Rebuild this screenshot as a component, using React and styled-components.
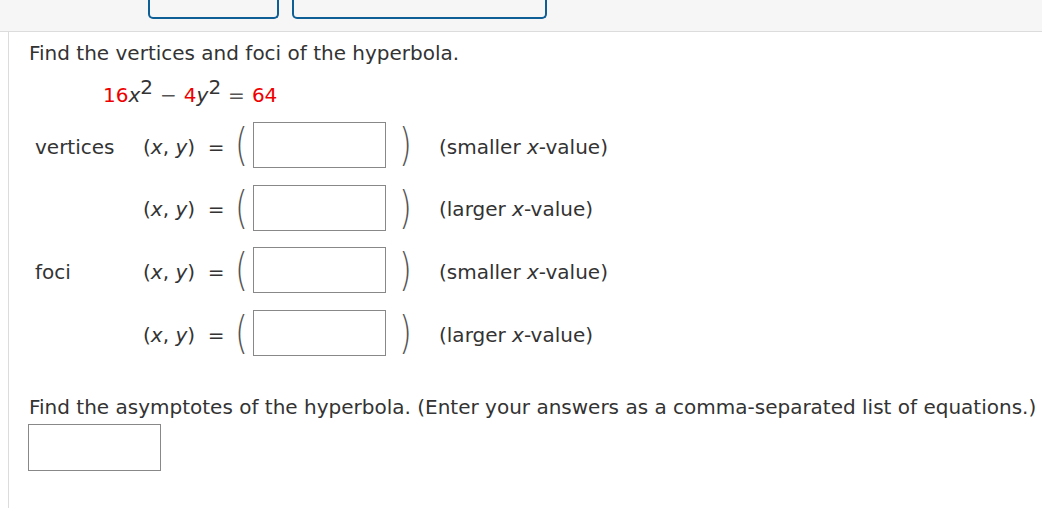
import React from 'react'
import styled, { createGlobalStyle } from 'styled-components'

const Global = createGlobalStyle`
    body {
        margin: 0;
        background: #fff;
        font-family: 'DejaVu Sans', Verdana, sans-serif;
        color: #333;
    }
`

const TopBar = styled.div`
    height: 31px;
    background: #f6f6f6;
    border-bottom: 1px solid #dcdcdc;
    display: flex;
    align-items: flex-start;
    gap: 13px;
    padding-left: 148px;
`

const TabButton = styled.div`
    box-sizing: border-box;
    width: ${p => p.w}px;
    height: 19px;
    border: 2px solid #0e5f96;
    border-top: none;
    border-radius: 0 0 5px 5px;
    background: #f6f6f6;
`

const Panel = styled.div`
    margin-left: 8px;
    border-left: 1px solid #dcdcdc;
    padding: 9px 0 0 20px;
    min-height: calc(100vh - 32px);
    box-sizing: border-box;
    font-size: 20px;
`

const Prompt = styled.div`
    line-height: 24px;
    white-space: nowrap;
`

const Equation = styled.div`
    line-height: 24px;
    margin: 18px 0 0 74px;
    color: #333;
`

const Red = styled.span`
    color: #ee0000;
`

const Var = styled.i`
    font-style: italic;
`

const Sup = styled.sup`
    font-size: 20px;
    line-height: 0;
    vertical-align: 8px;
`

const Op = styled.span`
    color: #555;
    margin: 0 7px;
`

const Rows = styled.div`
    display: grid;
    grid-template-columns: 108px 92px auto;
    grid-auto-rows: 46px;
    row-gap: 16.7px;
    margin: 15px 0 0 6px;
    align-items: center;
`

const Label = styled.div`
    padding-top: 3px;
`

const Pair = styled.div`
    white-space: nowrap;
    padding-top: 3px;
`

const Answer = styled.div`
    display: flex;
    align-items: center;
    height: 46px;
`

const Paren = styled.span`
    font-size: 44px;
    font-weight: 200;
    color: #555;
    line-height: 46px;
    display: inline-block;
    width: ${p => p.w}px;
    text-align: ${p => p.side};
    transform: scaleX(0.75);
    transform-origin: ${p => p.side} center;
`

const Box = styled.div`
    box-sizing: border-box;
    width: 133px;
    height: 46px;
    border: 1px solid #888;
    background: #fff;
`

const Hint = styled.span`
    margin-left: 27px;
    white-space: nowrap;
    padding-top: 3px;
`

const Asym = styled(Prompt)`
    margin-top: 39px;
`

const BigBox = styled(Box)`
    margin-top: 5px;
    margin-left: -1px;
    height: 47px;
`

const rows = [
    { label: 'vertices', hint: 'smaller' },
    { label: '', hint: 'larger' },
    { label: 'foci', hint: 'smaller' },
    { label: '', hint: 'larger' },
]

const App = () => {
    return (
        <div>
            <Global />
            <TopBar>
                <TabButton w={131} />
                <TabButton w={255} />
            </TopBar>
            <Panel>
                <Prompt>Find the vertices and foci of the hyperbola.</Prompt>
                <Equation>
                    <Red>16</Red><Var>x</Var><Sup>2</Sup>
                    <Op>&minus;</Op>
                    <Red>4</Red><Var>y</Var><Sup>2</Sup>
                    <Op>=</Op>
                    <Red>64</Red>
                </Equation>
                <Rows>
                    {rows.map((r, i) => (
                        <React.Fragment key={i}>
                            <Label>{r.label}</Label>
                            <Pair>(<Var>x</Var>, <Var>y</Var>) &nbsp;=</Pair>
                            <Answer>
                                <Paren w={18} side="left">(</Paren>
                                <Box />
                                <Paren w={26} side="right">)</Paren>
                                <Hint>({r.hint} <Var>x</Var>-value)</Hint>
                            </Answer>
                        </React.Fragment>
                    ))}
                </Rows>
                <Asym>Find the asymptotes of the hyperbola. (Enter your answers as a comma-separated list of equations.)</Asym>
                <BigBox />
            </Panel>
        </div>
    )
}

export default App
